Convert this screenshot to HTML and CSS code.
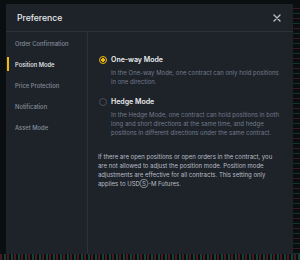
FILE: index.html
```html
<!DOCTYPE html>
<html>
<head>
<meta charset="utf-8">
<link rel="stylesheet" href="styles.css">
</head>
<body>
<div class="page">
  <div class="dialog">
    <div class="header">
      <span class="title">Preference</span>
      <svg class="close" width="8" height="8" viewBox="0 0 8 8"><path d="M1 1L7 7M7 1L1 7" stroke="#b7bdc6" stroke-width="1.4" stroke-linecap="round"/></svg>
    </div>
    <div class="body">
      <nav class="sidebar">
        <div class="item">Order Confirmation</div>
        <div class="item active">Position Mode</div>
        <div class="item">Price Protection</div>
        <div class="item">Notification</div>
        <div class="item">Asset Mode</div>
      </nav>
      <div class="content">
        <div class="option">
          <div class="opt-head"><span class="radio checked"></span><span class="opt-title">One-way Mode</span></div>
          <p class="desc">In the One-way Mode, one contract can only hold positions in one direction.</p>
        </div>
        <div class="option">
          <div class="opt-head"><span class="radio"></span><span class="opt-title">Hedge Mode</span></div>
          <p class="desc">In the Hedge Mode, one contract can hold positions in both long and short directions at the same time, and hedge positions in different directions under the same contract.</p>
        </div>
        <p class="note">If there are open positions or open orders in the contract, you are not allowed to adjust the position mode. Position mode adjustments are effective for all contracts. This setting only applies to USDⓈ-M Futures.</p>
      </div>
    </div>
  </div>
  <div class="chart-right"></div>
</div>
<div class="chart-bottom"></div>
</body>
</html>
```

FILE: styles.css
```css
* { box-sizing: border-box; }
html, body { margin: 0; padding: 0; }
body {
  width: 300px;
  height: 260px;
  background: #0b0e11;
  font-family: Inter, "Noto Sans", sans-serif;
  overflow: hidden;
}
.page {
  display: flex;
  padding: 4px 0 0 6px;
  height: 254px;
}
.dialog {
  width: 287px;
  height: 250px;
  background: #1e2329;
  display: flex;
  flex-direction: column;
}
.header {
  height: 28px;
  flex: none;
  display: flex;
  align-items: center;
  justify-content: space-between;
  padding: 0 12px 0 11px;
  border-bottom: 1px solid #2b3139;
}
.title {
  color: #eaecef;
  font-size: 8.6px;
  font-weight: 500;
}
.close { display: block; }
.body {
  flex: 1;
  display: flex;
}
.sidebar {
  width: 82px;
  flex: none;
  border-right: 1px solid #2b3139;
  padding-top: 1px;
  display: flex;
  flex-direction: column;
}
.item {
  height: 21px;
  display: flex;
  align-items: center;
  padding-left: 9px;
  font-size: 5.8px;
  color: #848e9c;
  font-weight: 500;
  position: relative;
}
.item.active { color: #eaecef; }
.item.active::before {
  content: "";
  position: absolute;
  left: 1px;
  top: 3px;
  bottom: 4px;
  width: 1.5px;
  background: #f0b90b;
}
.content {
  flex: 1;
  padding: 23px 10px 0 10px;
}
.option { margin-bottom: 11px; }
.opt-head {
  display: flex;
  align-items: center;
  height: 9px;
}
.radio {
  width: 8px;
  height: 8px;
  border-radius: 50%;
  border: 1px solid #474d57;
  margin: 0 4px 0 1px;
  flex: none;
}
.radio.checked {
  border: 1.5px solid #f0b90b;
  background: radial-gradient(circle, #f0b90b 0 1.6px, transparent 1.8px);
}
.opt-title {
  color: #eaecef;
  font-size: 7px;
  font-weight: 600;
}
.desc {
  margin: 4px 0 0 13px;
  color: #707a8a;
  font-size: 6px;
  line-height: 9px;
}
.note {
  margin: 15px 6px 0 0;
  color: #b7bdc6;
  font-size: 6px;
  line-height: 9px;
}
.chart-right {
  flex: 1;
  height: 250px;
  background:
    repeating-linear-gradient(180deg, transparent 0 4px, #3a1a22 4px 5px, transparent 5px 9px, #12352a 9px 10px);
}
.chart-bottom {
  height: 6px;
  background: repeating-linear-gradient(90deg, #4a1a24 0 2px, #0b0e11 2px 4px, #134234 4px 6px, #0b0e11 6px 7px);
}
```
